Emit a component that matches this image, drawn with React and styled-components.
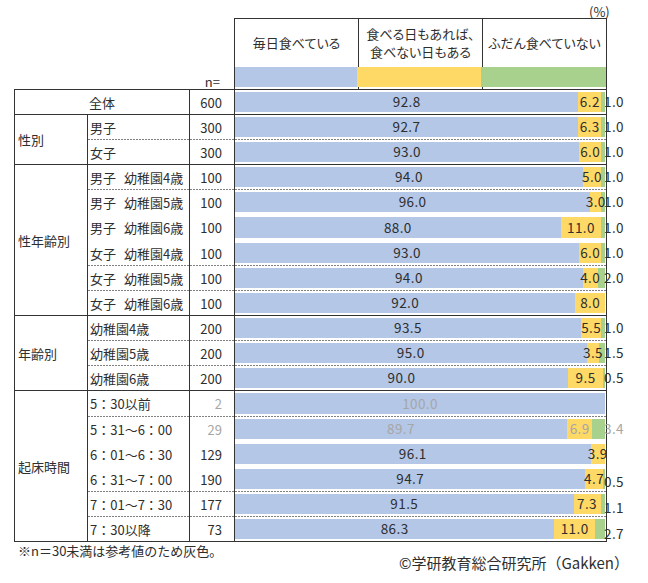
import React from "react";
import styled, { createGlobalStyle } from "styled-components";

const GlobalStyle = createGlobalStyle`
  *, *::before, *::after { box-sizing: border-box; }
  html, body { margin: 0; padding: 0; background: #fff; }
  body {
    font-family: "Noto Sans CJK JP", "Noto Sans", sans-serif;
    font-size: 13px;
    color: #2e2e2e;
  }
`;

const COLORS = { every: "#b4c7e7", some: "#ffd966", never: "#a9d18e" };
const LINE = "#333";
const DASH = "#808080";
const GREY = "#a6a6a6";

const legend = [
  { key: "every", lines: ["毎日食べている"] },
  { key: "some", lines: ["食べる日もあれば、", "食べない日もある"] },
  { key: "never", lines: ["ふだん食べていない"] },
];

const groups = [
  { label: "全体", span: true, rows: [{ n: 600, v: [92.8, 6.2, 1.0] }] },
  {
    label: "性別",
    rows: [
      { name: "男子", n: 300, v: [92.7, 6.3, 1.0] },
      { name: "女子", n: 300, v: [93.0, 6.0, 1.0], line: "dashed" },
    ],
  },
  {
    label: "性年齢別",
    rows: [
      { name: "男子　幼稚園4歳", n: 100, v: [94.0, 5.0, 1.0] },
      { name: "男子　幼稚園5歳", n: 100, v: [96.0, 3.0, 1.0], line: "dashed" },
      { name: "男子　幼稚園6歳", n: 100, v: [88.0, 11.0, 1.0], line: "none", tall: true },
      { name: "女子　幼稚園4歳", n: 100, v: [93.0, 6.0, 1.0], line: "none" },
      { name: "女子　幼稚園5歳", n: 100, v: [94.0, 4.0, 2.0], line: "dashed" },
      { name: "女子　幼稚園6歳", n: 100, v: [92.0, 8.0, 0], line: "dashed" },
    ],
  },
  {
    label: "年齢別",
    rows: [
      { name: "幼稚園4歳", n: 200, v: [93.5, 5.5, 1.0] },
      { name: "幼稚園5歳", n: 200, v: [95.0, 3.5, 1.5], line: "dashed" },
      { name: "幼稚園6歳", n: 200, v: [90.0, 9.5, 0.5], line: "dashed" },
    ],
  },
  {
    label: "起床時間",
    rows: [
      { name: "5：30以前", n: 2, v: [100.0, 0, 0], grey: true, tall: true },
      { name: "5：31～6：00", n: 29, v: [89.7, 6.9, 3.4], grey: true, line: "dashed" },
      { name: "6：01～6：30", n: 129, v: [96.1, 3.9, 0], line: "none" },
      { name: "6：31～7：00", n: 190, v: [94.7, 4.7, 0.5], line: "none", drop: 3 },
      { name: "7：01～7：30", n: 177, v: [91.5, 7.3, 1.1], line: "dashed", drop: 4 },
      { name: "7：30以降", n: 73, v: [86.3, 11.0, 2.7], line: "dashed", drop: 5 },
    ],
  },
];

const lineBg = {
  solid: `linear-gradient(${LINE}, ${LINE}) top left / 100% 1px no-repeat`,
  dashed: `repeating-linear-gradient(to right, ${DASH} 0 2px, transparent 2px 3px) top left / 100% 1px no-repeat`,
  none: "none",
};

const Page = styled.div`
  width: 648px;
  height: 583px;
  background: #fff;
`;

const TopNote = styled.div`
  height: 18px;
  padding: 4px 0 0 589px;
  line-height: 16px;
`;

const HeaderRow = styled.div`
  display: flex;
`;

const HeaderLead = styled.div`
  width: 234px;
  display: flex;
  justify-content: flex-end;
  align-items: flex-end;
  padding-right: 14px;
`;

const NLabel = styled.span`
  line-height: 14px;
`;

const HeaderBox = styled.div`
  display: flex;
  border-top: 1px solid ${LINE};
`;

const HeaderCol = styled.div`
  width: ${(p) => (p.$last ? 125 : 124)}px;
  display: flex;
  flex-direction: column;
  border-left: 1px solid ${LINE};
  border-right: ${(p) => (p.$last ? `1px solid ${LINE}` : "none")};
  padding-bottom: 2px;
`;

const HeaderText = styled.div`
  height: 48px;
  display: flex;
  align-items: center;
  justify-content: center;
  text-align: center;
  line-height: 18px;
  font-feature-settings: "palt";
`;

const Swatch = styled.div`
  height: 20px;
  background: ${(p) => COLORS[p.$kind]};
  margin-left: ${(p) => (p.$first ? 0 : -2)}px;
`;

const Table = styled.div`
  margin-left: 14px;
  width: 593px;
  border-left: 1px solid ${LINE};
  border-bottom: 1px solid ${LINE};
`;

const Group = styled.div`
  display: flex;
`;

const CategoryCell = styled.div`
  width: 73px;
  flex: none;
  display: flex;
  align-items: center;
  padding-left: 3px;
  border-top: 1px solid ${LINE};
  border-right: 1px solid ${LINE};
`;

const Rows = styled.div`
  display: flex;
  flex-direction: column;
`;

const Row = styled.div`
  display: flex;
  height: ${(p) => (p.$tall ? 26 : 25)}px;
  background: ${(p) => lineBg[p.$line]};
`;

const NameCell = styled.div`
  width: ${(p) => (p.$span ? 175 : 102)}px;
  flex: none;
  display: flex;
  align-items: center;
  justify-content: ${(p) => (p.$span ? "center" : "flex-start")};
  padding: 1px 0 0 ${(p) => (p.$span ? 0 : 2)}px;
  border-right: 1px solid ${LINE};
  white-space: nowrap;
`;

// the full-width space between 男子/女子 and 幼稚園 is set narrower in the source
const Gap = styled.span`
  display: inline-block;
  width: 8px;
  overflow: hidden;
`;

const NCell = styled.div`
  width: 45px;
  flex: none;
  display: flex;
  align-items: center;
  justify-content: flex-end;
  padding: 1px 12px 0 0;
  border-right: 1px solid ${LINE};
  color: ${(p) => (p.$grey ? GREY : "inherit")};
`;

const BarCell = styled.div`
  width: 372px;
  flex: none;
  padding: 3px 1px 2px 0;
  border-right: 1px solid ${LINE};
`;

const Track = styled.div`
  position: relative;
  display: flex;
  height: 100%;
`;

const Seg = styled.div`
  flex: 0 0 ${(p) => p.$pct}%;
  min-width: 0;
  display: flex;
  align-items: center;
  justify-content: center;
  background: ${(p) => COLORS[p.$kind]};
`;

const Value = styled.span`
  position: relative;
  white-space: nowrap;
  font-size: 13.5px;
  letter-spacing: 0.4px;
  line-height: 1;
  color: ${(p) => (p.$grey ? GREY : "inherit")};
`;

const OuterValue = styled(Value)`
  position: absolute;
  left: calc(100% - 1px);
  top: 50%;
  transform: translateY(calc(-50% + ${(p) => p.$drop || 0}px));
`;

const Footer = styled.div`
  display: flex;
  justify-content: space-between;
  align-items: flex-start;
  padding: 0 19px 0 18px;
`;

const Footnote = styled.div`
  margin-top: 1px;
  line-height: 16px;
`;

const Copyright = styled.div`
  margin-top: 12px;
  font-size: 15px;
  line-height: 18px;
`;

const fmt = (x) => x.toFixed(1);

function Name({ text }) {
  const parts = text.split("　");
  if (parts.length < 2) return text;
  return (
    <>
      {parts[0]}
      <Gap>　</Gap>
      {parts[1]}
    </>
  );
}

function Bar({ v, grey, drop }) {
  const kinds = ["every", "some", "never"];
  return (
    <Track>
      {v.map((pct, i) =>
        pct > 0 ? (
          <Seg key={kinds[i]} $pct={pct} $kind={kinds[i]}>
            {i < 2 && <Value $grey={grey}>{fmt(pct)}</Value>}
          </Seg>
        ) : null
      )}
      {v[2] > 0 && (
        <OuterValue $grey={grey} $drop={drop}>
          {fmt(v[2])}
        </OuterValue>
      )}
    </Track>
  );
}

function DataRow({ row, index, span, label }) {
  const line = index === 0 ? "solid" : row.line || "none";
  return (
    <Row $line={line} $tall={row.tall}>
      <NameCell $span={span}>{span ? label : <Name text={row.name} />}</NameCell>
      <NCell $grey={row.grey}>{row.n}</NCell>
      <BarCell>
        <Bar v={row.v} grey={row.grey} drop={row.drop} />
      </BarCell>
    </Row>
  );
}

export default function App() {
  return (
    <Page>
      <GlobalStyle />
      <TopNote>(%)</TopNote>
      <HeaderRow>
        <HeaderLead>
          <NLabel>n=</NLabel>
        </HeaderLead>
        <HeaderBox>
          {legend.map((item, i) => (
            <HeaderCol key={item.key} $last={i === legend.length - 1}>
              <HeaderText>
                <span>
                  {item.lines.map((t, j) => (
                    <React.Fragment key={j}>
                      {j > 0 && <br />}
                      {t}
                    </React.Fragment>
                  ))}
                </span>
              </HeaderText>
              <Swatch $kind={item.key} $first={i === 0} />
            </HeaderCol>
          ))}
        </HeaderBox>
      </HeaderRow>

      <Table>
        {groups.map((g) => (
          <Group key={g.label}>
            {!g.span && <CategoryCell>{g.label}</CategoryCell>}
            <Rows>
              {g.rows.map((row, i) => (
                <DataRow key={i} row={row} index={i} span={g.span} label={g.label} />
              ))}
            </Rows>
          </Group>
        ))}
      </Table>

      <Footer>
        <Footnote>※n＝30未満は参考値のため灰色。</Footnote>
        <Copyright>©学研教育総合研究所（Gakken）</Copyright>
      </Footer>
    </Page>
  );
}
